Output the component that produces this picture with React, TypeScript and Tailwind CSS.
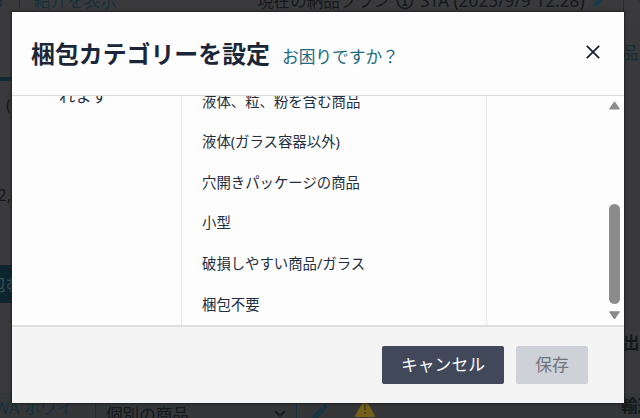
const categories = [
  "液体、粒、粉を含む商品",
  "液体(ガラス容器以外)",
  "穴開きパッケージの商品",
  "小型",
  "破損しやすい商品/ガラス",
  "梱包不要",
];

function Pencil({ className }: { className: string }) {
  return (
    <svg viewBox="0 0 18 18" className={className} fill="currentColor">
      <path d="M1 17l1.2-5L11 3.200l3.800 3.800L6 15.800zM12 2.200l1.200-1.200q1-.8 2 0l1.800 1.800q.8 1 0 2L15.800 6z" />
    </svg>
  );
}

function PageBehind() {
  return (
    <div className="flex h-full w-full flex-col text-[16.600px] leading-6 whitespace-nowrap text-[#15181b]">
      <div className="flex h-6 shrink-0 overflow-hidden bg-[#3a3a3c]">
        <div className="-mt-[11px] flex w-[257px] shrink-0 text-[#142f3a]">
          <span className="-ml-[12px] w-[31px]">ら</span>
          <span className="mt-1 mr-[14px] h-[15px] w-px bg-[#1e3039]" />
          <span>紹介を表示</span>
        </div>
        <div className="-mt-[11px] flex w-[335px] shrink-0">
          <span className="w-[139px]">現在の納品プラン</span>
          <svg viewBox="0 0 18 18" className="mt-[3px] mr-[6px] h-[18px] w-[18px]" fill="none" stroke="currentColor" strokeWidth="1.600">
            <circle cx="9" cy="9" r="7.500" />
            <path d="M9 4v1.500M9 7v6M6.500 13h5" />
          </svg>
          <span className="text-[17.300px]">STA (2025/9/9 12:28)</span>
        </div>
        <Pencil className="-mt-[7px] h-[15px] w-[15px] shrink-0 text-[#173b4a]" />
        <span className="ml-[16px] h-3 w-px shrink-0 bg-[#18313d]" />
        <span className="-mt-[13px] ml-[13px] text-[#173947]">ヘ</span>
      </div>
      <div className="flex h-[369px] shrink-0 justify-between overflow-hidden">
        <div className="flex w-6 flex-col bg-[#3a3a3c]">
          <div className="h-[57px] shrink-0 border-b-4 border-[#132a34]" />
          <div className="h-[106px] shrink-0 pt-[12px] pl-[6px]">(0)</div>
          <div className="-ml-[3px] h-[78px] shrink-0 text-[17px] leading-[16px]">2,</div>
          <div className="h-[38px] shrink-0 bg-[#0c252e] pt-2 text-[#3d5057]">
            <span className="-ml-[11px]">包む</span>
          </div>
        </div>
        <div className="flex w-[18px] flex-col overflow-hidden bg-[#39393b]">
          <div className="h-[307px] shrink-0 pt-[17px] text-[#172d37]">
            <span>品:</span>
          </div>
          <div className="h-[62px] shrink-0 pl-px font-bold">出荷</div>
        </div>
      </div>
      <div className="flex h-[25px] shrink-0 overflow-hidden bg-[#343638]">
        <div className="-ml-[6px] flex w-[101px] shrink-0 pt-[3px] text-[#17303d]">WA ホワイ</div>
        <div className="flex w-[202px] shrink-0 border-r border-l border-[#17303d] pt-[10px] pl-[10px]">
          <span className="w-[168px]">個別の商品</span>
          <svg viewBox="0 0 12 8" className="mt-[7px] h-2 w-3" fill="none" stroke="currentColor" strokeWidth="1.800">
            <path d="M1 1l5 5 5-5" />
          </svg>
        </div>
        <Pencil className="mt-[11px] ml-[14px] h-[17px] w-[17px] shrink-0 text-[#173443]" />
        <svg viewBox="0 0 22 18" className="mt-[6px] ml-[26px] h-[18px] w-[22px] shrink-0">
          <path d="M11 1.500L20 17H2z" fill="#75601c" stroke="#75601c" strokeWidth="2" strokeLinejoin="round" />
          <path d="M11 6v5M11 13v2" stroke="#4d4320" strokeWidth="2" />
        </svg>
        <span className="ml-[245px] pt-[1px] font-bold">輸送</span>
      </div>
    </div>
  );
}

function Dialog() {
  return (
    <section className="absolute top-3 left-3 flex h-[391px] w-[612px] flex-col overflow-hidden bg-[#fdfdfd] text-[#232f3e] shadow-[0_0_2px_1px_#202123]">
      <header className="flex h-[84px] shrink-0 items-center border-b border-[#d9dadb] pl-[19px]">
        <h1 className="w-[251px] text-[23.900px] leading-9 font-bold whitespace-nowrap text-[#1b2638]">梱包カテゴリーを設定</h1>
        <a className="mt-[6px] text-[16.700px] leading-6 text-[#206a7d]">お困りですか？</a>
        <button aria-label="閉じる" className="mr-6 mb-[3px] ml-auto text-[#18222f]">
          <svg viewBox="0 0 14 14" className="h-[14px] w-[14px]" fill="none" stroke="currentColor" strokeWidth="1.800">
            <path d="M.8.8l12.400 12.400M13.200.8L.8 13.200" />
          </svg>
        </button>
      </header>
      <div className="flex h-[229px] shrink-0 overflow-hidden">
        <div className="w-[170px] border-r border-[#e7e8e9] pl-[47px] text-[16.300px] leading-6">
          <p className="-mt-[12px]">れます</p>
        </div>
        <ul className="-mt-[15px] h-[244px] w-[305px] border-r border-[#e9eaeb] pl-5 text-[14.400px] whitespace-nowrap">
          {categories.map((name) => (
            <li key={name} className="flex h-[40.650px] items-center">{name}</li>
          ))}
        </ul>
        <div className="mr-[4px] ml-auto flex w-[11px] flex-col items-center text-[#8b8b8b]">
          <svg viewBox="0 0 11 9" className="mt-[5px] h-[9px] w-[11px]" fill="currentColor" stroke="currentColor" strokeLinejoin="round"><path d="M5.500 .8L10.400 8H.6z" /></svg>
          <div className="mt-[94px] h-[100px] w-[11px] rounded-full bg-[#8b8b8b]" />
          <svg viewBox="0 0 11 9" className="mt-[7px] h-[9px] w-[11px]" fill="currentColor" stroke="currentColor" strokeLinejoin="round"><path d="M.6 .8h9.800L5.500 8z" /></svg>
        </div>
      </div>
      <footer className="flex h-[78px] shrink-0 items-center justify-end gap-3 border-t-2 border-[#dededf] bg-[#f4f4f4] pr-9 text-[16.800px]">
        <button className="h-[38px] w-[122px] rounded-[2px] bg-[#40485a] text-[#fbfbfb]">キャンセル</button>
        <button className="h-[38px] w-[72px] rounded-[2px] bg-[#ced1d7] text-[#6e7480]">保存</button>
      </footer>
    </section>
  );
}

export default function App() {
  return (
    <main className="relative h-[418px] w-[640px] overflow-hidden bg-[#39393b] font-['Noto_Sans','Noto_Sans_CJK_JP',sans-serif]">
      <PageBehind />
      <Dialog />
    </main>
  );
}
